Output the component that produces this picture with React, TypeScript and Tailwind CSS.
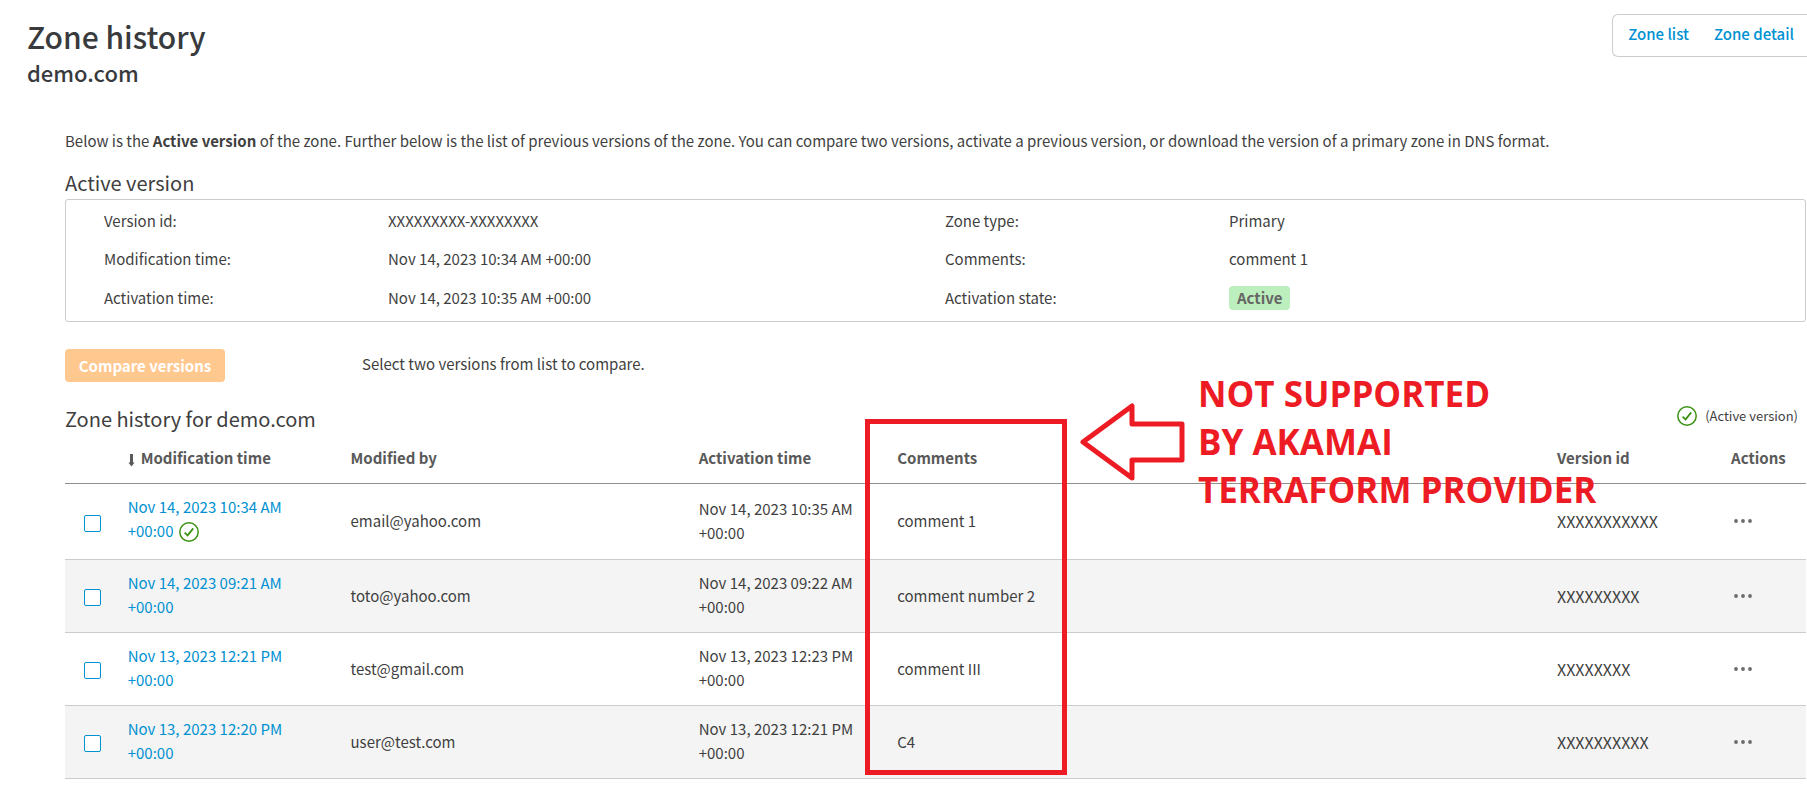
type Row = {
  modified: string
  by: string
  activated: string
  comment: string
  version: string
  active?: boolean
}

const rows: Row[] = [
  { modified: 'Nov 14, 2023 10:34 AM +00:00', by: 'email@yahoo.com', activated: 'Nov 14, 2023 10:35 AM +00:00', comment: 'comment 1', version: 'XXXXXXXXXXX', active: true },
  { modified: 'Nov 14, 2023 09:21 AM +00:00', by: 'toto@yahoo.com', activated: 'Nov 14, 2023 09:22 AM +00:00', comment: 'comment number 2', version: 'XXXXXXXXX' },
  { modified: 'Nov 13, 2023 12:21 PM +00:00', by: 'test@gmail.com', activated: 'Nov 13, 2023 12:23 PM +00:00', comment: 'comment III', version: 'XXXXXXXX' },
  { modified: 'Nov 13, 2023 12:20 PM +00:00', by: 'user@test.com', activated: 'Nov 13, 2023 12:21 PM +00:00', comment: 'C4', version: 'XXXXXXXXXX' },
]

function ActiveIcon() {
  return (
    <svg width="20" height="20" viewBox="0 0 20 20" fill="none" stroke="#3a9112" className="shrink-0" aria-hidden="true">
      <circle cx="10" cy="10" r="9.2" strokeWidth="1.5" />
      <path d="M5.6 10.6 8.6 13.4 14.2 6.4" strokeWidth="1.7" />
    </svg>
  )
}

function SortIcon() {
  return (
    <svg width="7" height="13" viewBox="0 0 7 13" className="mr-[6px] inline-block" aria-hidden="true">
      <path d="M2 0h3v8.5h1.6L3.5 12.6 0.4 8.5H2z" fill="#595959" />
    </svg>
  )
}

function MoreIcon() {
  return (
    <svg width="18" height="4" viewBox="0 0 18 4" fill="#6b6b6b" aria-hidden="true">
      <circle cx="2" cy="2" r="1.9" />
      <circle cx="9" cy="2" r="1.9" />
      <circle cx="16" cy="2" r="1.9" />
    </svg>
  )
}

export default function App() {
  return (
    <div className="overflow-x-hidden bg-white font-['Noto_Sans_CJK_SC',sans-serif] text-[15px] leading-6 text-[#3f3f3f]">
      <header className="flex items-start justify-between pt-[14px] pl-[27px]">
        <div className="text-[#383a3d]">
          <h1 className="text-[30px] leading-11 font-medium">Zone history</h1>
          <h2 className="text-[22px] leading-7 font-medium">demo.com</h2>
        </div>
        <nav className="flex h-[43px] items-center gap-[25px] rounded-l-md border border-r-0 border-[#ccc] pr-[13px] pb-1 pl-[15px] font-medium text-[#0091d2]">
          <a href="#list">Zone list</a>
          <a href="#detail">Zone detail</a>
        </nav>
      </header>

      <main className="pt-[43px] pr-px pl-[65px]">
        <p>
          Below is the <b>Active version</b> of the zone. Further below is the list of previous versions of the zone. You can compare two versions, activate a previous version, or download the version of a primary zone in DNS format.
        </p>

        <h3 className="mt-[14px] pb-px text-xl leading-[31px]">Active version</h3>
        <dl className="grid grid-cols-[284fr_557fr_284fr_557fr] items-center gap-y-[14px] rounded-[3px] border border-[#ccc] pt-[9px] pr-[19px] pb-[10px] pl-[38px]">
          <dt>Version id:</dt>
          <dd>XXXXXXXXX-XXXXXXXX</dd>
          <dt>Zone type:</dt>
          <dd>Primary</dd>
          <dt>Modification time:</dt>
          <dd>Nov 14, 2023 10:34 AM +00:00</dd>
          <dt>Comments:</dt>
          <dd>comment 1</dd>
          <dt>Activation time:</dt>
          <dd>Nov 14, 2023 10:35 AM +00:00</dd>
          <dt>Activation state:</dt>
          <dd className="py-px">
            <span className="block w-fit rounded bg-[#bdeebd] px-2 font-bold text-[#666]">Active</span>
          </dd>
        </dl>

        <div className="mt-[27px] flex items-center">
          <button type="button" disabled className="h-[33px] w-40 rounded bg-[#ffc88f] font-bold text-white">
            Compare versions
          </button>
          <p className="ml-[137px] pb-[3px]">Select two versions from list to compare.</p>
        </div>

        <section className="relative mt-[18px]">
          <div className="flex items-start justify-between pr-2">
            <h3 className="pt-[3px] pb-px text-xl leading-8">Zone history for demo.com</h3>
            <p className="flex items-center gap-2 pt-1 text-[13px]">
              <ActiveIcon />
              (Active version)
            </p>
          </div>

          <table className="w-full table-fixed border-collapse text-left">
            <colgroup>
              <col className="w-[3.6%]" />
              <col className="w-[12.8%]" />
              <col className="w-[20%]" />
              <col className="w-[11.4%]" />
              <col className="w-[37.9%]" />
              <col className="w-[10%]" />
              <col className="w-[4.3%]" />
            </colgroup>
            <thead>
              <tr className="h-[47px] border-b border-[#8f8f8f] text-[#595959] *:pb-[2px]">
                <th />
                <th><SortIcon />Modification time</th>
                <th>Modified by</th>
                <th>Activation time</th>
                <th>Comments</th>
                <th>Version id</th>
                <th>Actions</th>
              </tr>
            </thead>
            <tbody>
              {rows.map((r) => (
                <tr key={r.modified} className="border-b border-[#ccc] even:bg-[#f4f4f4]">
                  <td className="pl-[19px]">
                    <input
                      type="checkbox"
                      aria-label={r.modified}
                      className="mt-1 block size-[17px] appearance-none rounded-[2px] border border-[#0091d2] bg-white"
                    />
                  </td>
                  <td className="pt-[11px] pr-8 pb-[13px]">
                    <a href="#version" className="text-[#0091d2]">{r.modified}</a>
                    {r.active && (
                      <span className="ml-[6px] inline-flex h-[27px] items-center align-middle">
                        <ActiveIcon />
                      </span>
                    )}
                  </td>
                  <td>{r.by}</td>
                  <td className="pr-4 pb-px">{r.activated}</td>
                  <td>{r.comment}</td>
                  <td className="text-base">{r.version}</td>
                  <td>
                    <button type="button" aria-label="Actions" className="flex h-6 items-center pl-[3px]">
                      <MoreIcon />
                    </button>
                  </td>
                </tr>
              ))}
            </tbody>
          </table>

          <div className="pointer-events-none absolute top-[19px] left-[800px] h-[356px] w-[202px] border-[5px] border-[#ed1c24]" />
          <div className="pointer-events-none absolute -top-[30px] left-[1015px] flex items-center gap-[13px]">
            <svg width="105" height="78" viewBox="0 0 105 78" fill="none" stroke="#ed1c24" strokeWidth="5" strokeLinejoin="round" aria-hidden="true">
              <path d="M3 39 52 3V21H102V57H52V75Z" />
            </svg>
            <p className="font-['Open_Sans',sans-serif] text-[35px] leading-12 font-bold whitespace-nowrap text-[#ed1c24]">
              NOT SUPPORTED
              <br />
              BY AKAMAI
              <br />
              TERRAFORM PROVIDER
            </p>
          </div>
        </section>
      </main>
    </div>
  )
}
